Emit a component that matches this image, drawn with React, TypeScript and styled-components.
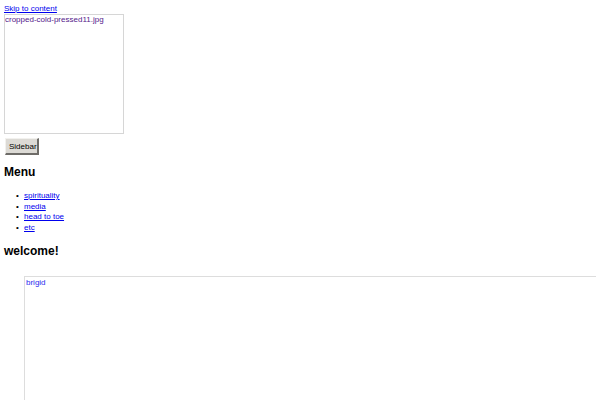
import React from "react";
import styled, { createGlobalStyle } from "styled-components";

const GlobalStyle = createGlobalStyle`
  html, body {
    margin: 0;
    padding: 0;
    background: #ffffff;
  }
  body {
    font-family: "Liberation Sans", Arial, sans-serif;
    color: #000000;
  }
`;

const Page = styled.div`
  padding: 4px 4px 0 4px;
  width: 600px;
  height: 400px;
  box-sizing: border-box;
  overflow: hidden;
`;

const SkipLink = styled.a`
  display: block;
  font-size: 8px;
  line-height: 10px;
  height: 10px;
  color: #0000ee;
  text-decoration: underline;
`;

const LogoFrame = styled.a`
  display: block;
  width: 120px;
  height: 120px;
  box-sizing: border-box;
  border: 1px solid #d6d6d6;
  color: #551a8b;
  font-size: 8px;
  line-height: 10px;
  text-decoration: none;
`;

const SidebarButton = styled.button`
  display: block;
  margin: 4px 0 0 1px;
  padding: 0 3px;
  height: 17px;
  width: 34px;
  box-sizing: border-box;
  font-family: "Liberation Sans", Arial, sans-serif;
  font-size: 8px;
  color: #000000;
  background: #dcdad5;
  border-style: solid;
  border-width: 1px 2px 2px 1px;
  border-color: #f2f1ee #6e6c68 #6e6c68 #f2f1ee;
`;

const Heading = styled.h2<{ $top: number }>`
  margin: ${(p) => p.$top}px 0 0 0;
  font-size: 12px;
  line-height: 14px;
  font-weight: bold;
`;

const MenuList = styled.ul`
  margin: 12px 0 0 0;
  padding-left: 20px;
  font-size: 8px;
  line-height: 10.6px;
  list-style: none;
`;

const MenuItem = styled.li`
  &::before {
    content: "•";
    display: inline-block;
    width: 8px;
    margin-left: -8px;
  }
`;

const MenuLink = styled.a`
  color: #0000ee;
  text-decoration: underline;
`;

const ContentFrame = styled.div`
  margin: 18px 0 0 20px;
  height: 200px;
  border-top: 1px solid #dddddd;
  border-left: 1px solid #dddddd;
`;

const ContentLink = styled.a`
  display: block;
  padding: 1px 0 0 1px;
  font-size: 8px;
  line-height: 10px;
  color: #2b2bee;
  text-decoration: none;
`;

const menu = ["spirituality", "media", "head to toe", "etc"];

export default function App() {
  return (
    <Page>
      <GlobalStyle />
      <SkipLink href="#content">Skip to content</SkipLink>
      <LogoFrame href="#">cropped-cold-pressed11.jpg</LogoFrame>
      <SidebarButton type="button">Sidebar</SidebarButton>
      <Heading $top={10}>Menu</Heading>
      <MenuList>
        {menu.map((m) => (
          <MenuItem key={m}>
            <MenuLink href="#">{m}</MenuLink>
          </MenuItem>
        ))}
      </MenuList>
      <Heading $top={11}>welcome!</Heading>
      <ContentFrame id="content">
        <ContentLink href="#">brigid</ContentLink>
      </ContentFrame>
    </Page>
  );
}
